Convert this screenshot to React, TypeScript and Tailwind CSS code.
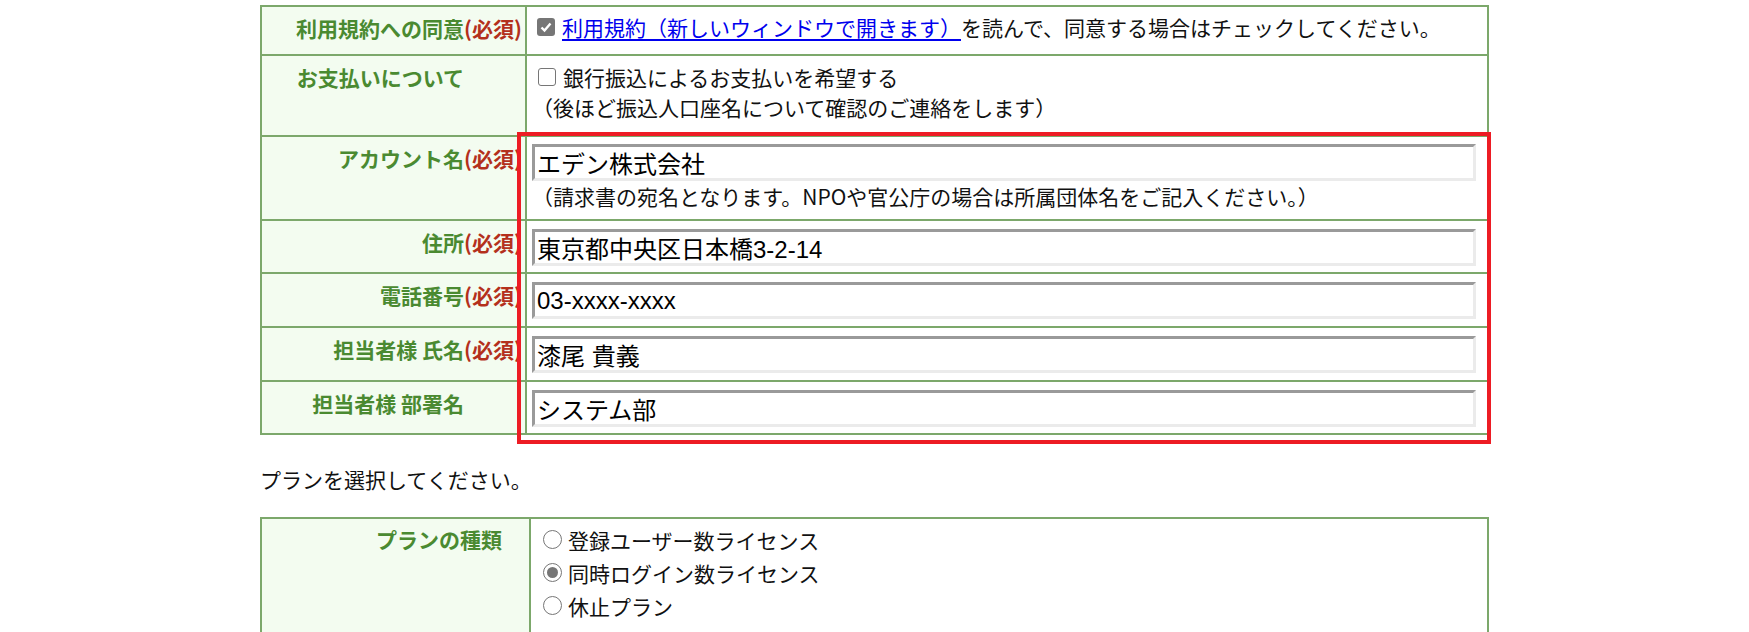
import React from "react";

const labelCls =
  "bg-[#f3fcf0] border-r-2 border-[#7ca86b] text-right font-bold text-[21px] leading-[30px] text-[#4a8a31]";

function Req({ show = true }: { show?: boolean }) {
  return <span className={show ? "text-[#b4301c]" : "invisible"}>(必須)</span>;
}

function Field({ value }: { value: string }) {
  return (
    <input
      readOnly
      defaultValue={value}
      className="block w-[944px] h-[37px] border-[3px] border-solid border-t-[#9a9a9a] border-l-[#9a9a9a] border-r-[#ebebeb] border-b-[#ebebeb] bg-white px-[2px] text-[24px] text-black outline-none font-['Liberation_Sans','Noto_Sans_CJK_JP',sans-serif]"
    />
  );
}

function CheckBox({ checked }: { checked?: boolean }) {
  if (checked) {
    return (
      <span className="flex w-[18px] h-[18px] shrink-0 items-center justify-center rounded-[3px] bg-[#767676]">
        <svg width="14" height="14" viewBox="0 0 14 14">
          <path d="M2.5 7.5 L5.5 10.5 L11.5 3.5" fill="none" stroke="white" strokeWidth="2.4" />
        </svg>
      </span>
    );
  }
  return <span className="block w-[18px] h-[18px] shrink-0 rounded-[3px] border-[1.5px] border-[#767676] bg-white" />;
}

function Radio({ checked }: { checked?: boolean }) {
  return (
    <span className="flex w-[19px] h-[19px] shrink-0 items-center justify-center rounded-full border-[1.5px] border-[#767676] bg-white">
      {checked && <span className="block w-[11px] h-[11px] rounded-full bg-[#767676]" />}
    </span>
  );
}

const inputRows = [
  { label: "住所", req: true, value: "東京都中央区日本橋3-2-14", h: "h-[53px]" },
  { label: "電話番号", req: true, value: "03-xxxx-xxxx", h: "h-[54px]" },
  { label: "担当者様 氏名", req: true, value: "漆尾 貴義", h: "h-[54px]" },
  { label: "担当者様 部署名", req: false, value: "システム部", h: "h-[51px]" },
];

const plans = ["登録ユーザー数ライセンス", "同時ログイン数ライセンス", "休止プラン"];

export default function App() {
  return (
    <div className="h-[632px] overflow-hidden bg-white pt-[5px] text-[21px] leading-[30px] text-[#111] font-['Noto_Sans_CJK_JP',sans-serif]">
      <div className="mx-auto w-[1229px]">
        {/* account form */}
        <div className="relative border-2 border-[#7ca86b]">
          <div className="grid grid-cols-[265px_1fr] h-[49px] border-b-2 border-[#7ca86b]">
            <div className={`${labelCls} pt-[6px] pr-[3px]`}>
              利用規約への同意<Req />
            </div>
            <div className="flex items-start pt-[5px] pl-[10px]">
              <span className="mt-[6px] mr-[7px]">
                <CheckBox checked />
              </span>
              <span>
                <a className="text-[#0000ee] underline underline-offset-[3px]">利用規約（新しいウィンドウで開きます）</a>
                を読んで、同意する場合はチェックしてください。
              </span>
            </div>
          </div>

          <div className="grid grid-cols-[265px_1fr] h-[81px] border-b-2 border-[#7ca86b]">
            <div className={`${labelCls} pt-[6px] pr-[3px]`}>
              お支払いについて<Req show={false} />
            </div>
            <div className="pt-[6px] pl-[5px]">
              <div className="flex items-start">
                <span className="mt-[6px] ml-[6px] mr-[7px]">
                  <CheckBox />
                </span>
                <span>銀行振込によるお支払いを希望する</span>
              </div>
              <div>（後ほど振込人口座名について確認のご連絡をします）</div>
            </div>
          </div>

          <div className="grid grid-cols-[265px_1fr] h-[84px] border-b-2 border-[#7ca86b]">
            <div className={`${labelCls} pt-[6px] pr-[3px]`}>
              アカウント名<Req />
            </div>
            <div className="pt-[7px] pl-[5px]">
              <Field value="エデン株式会社" />
              <div>（請求書の宛名となります。NPOや官公庁の場合は所属団体名をご記入ください。）</div>
            </div>
          </div>

          {inputRows.map((r, i) => (
            <div
              key={r.label}
              className={`grid grid-cols-[265px_1fr] ${r.h} ${i < inputRows.length - 1 ? "border-b-2 border-[#7ca86b]" : ""}`}
            >
              <div className={`${labelCls} pt-[6px] pr-[3px]`}>
                {r.label}
                <Req show={r.req} />
              </div>
              <div className="pt-[8px] pl-[5px]">
                <Field value={r.value} />
              </div>
            </div>
          ))}

          {/* annotation frame */}
          <div className="pointer-events-none absolute left-[255px] top-[125px] w-[974px] h-[312px] border-4 border-[#ed1c24]" />
        </div>

        <p className="mt-[29px]">プランを選択してください。</p>

        {/* plan table */}
        <div className="mt-[23px] grid grid-cols-[269px_1fr] border-2 border-[#7ca86b]">
          <div className={`${labelCls} pt-[5px] pr-[27px]`}>プランの種類</div>
          <div className="pt-[4px] pb-[30px] pl-[12px]">
            {plans.map((p, i) => (
              <div key={p} className="flex h-[33px] items-center">
                <span className="mr-[6px]">
                  <Radio checked={i === 1} />
                </span>
                {p}
              </div>
            ))}
          </div>
        </div>
      </div>
    </div>
  );
}
